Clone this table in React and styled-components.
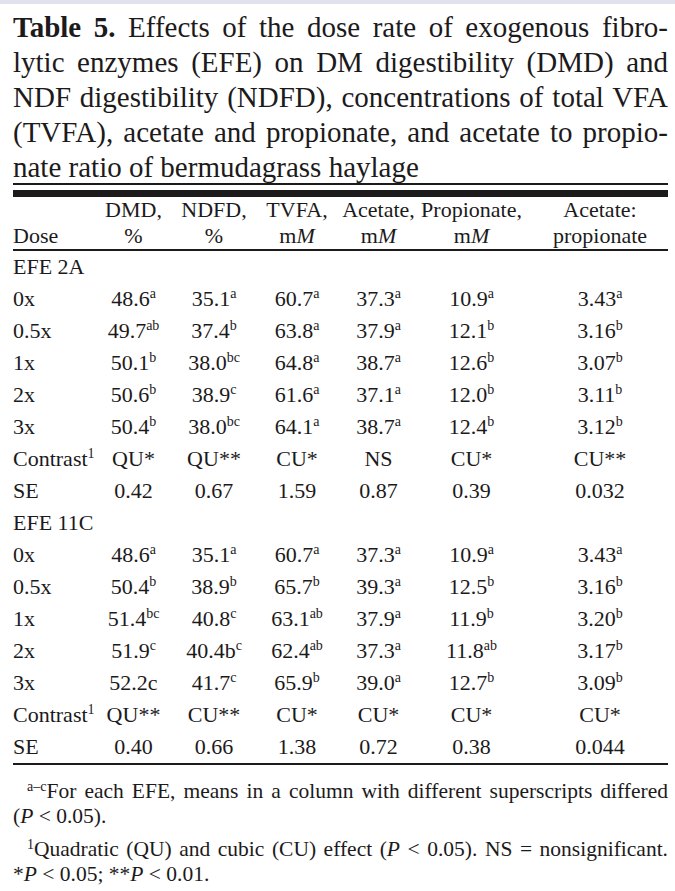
import React from 'react'
import styled, { createGlobalStyle } from 'styled-components'

const GlobalStyle = createGlobalStyle`
  html, body {
    margin: 0;
    padding: 0;
    background: #ffffff;
  }
  body {
    font-family: "Liberation Serif", "Times New Roman", serif;
    color: #1c1a1b;
  }
`

const Page = styled.div`
  width: 675px;
  min-height: 891px;
  box-sizing: border-box;
  border-top: 4px solid #e2e2ee;
  padding: 6px 7px 0 13px;
`

const Caption = styled.div`
  font-size: 29px;
  line-height: 35px;
`

const CaptionLine = styled.div`
  text-align: justify;
  text-align-last: ${p => (p.$last ? 'left' : 'justify')};
  white-space: nowrap;
`

const Bold = styled.b`
  font-weight: 700;
`

const DoubleRule = styled.div`
  margin-top: -2px;
  height: 2px;
  background: #1c1a1b;
  border-bottom: 5px solid #fff;
  box-shadow: 0 7px 0 0 #1c1a1b;
  margin-bottom: 2px;
`

const Table = styled.table`
  width: 100%;
  border-collapse: collapse;
  font-size: 22px;
  table-layout: fixed;
`

const Col = styled.col`
  width: ${p => p.$w}px;
`

const HeadCell = styled.th`
  font-weight: 400;
  text-align: ${p => (p.$left ? 'left' : 'center')};
  vertical-align: bottom;
  line-height: 26px;
  padding: 5px 0 0;
  padding-left: ${p => p.$pl || 0}px;
  border-bottom: 2.5px solid #1c1a1b;
  white-space: nowrap;
`

const Cell = styled.td`
  text-align: ${p => (p.$left ? 'left' : 'center')};
  height: 32px;
  padding: 0;
  padding-left: ${p => p.$pl || 0}px;
  line-height: 32px;
  white-space: nowrap;
`

const Row = styled.tr`
  border-bottom: ${p => (p.$last ? '2.5px solid #1c1a1b' : 'none')};
`

const Sup = styled.sup`
  font-size: 14px;
  line-height: 0;
  vertical-align: 8px;
`

const Notes = styled.div`
  font-size: 21.5px;
  line-height: 25px;
  padding-top: 14px;
`

const Note = styled.p`
  margin: 0 0 8px;
  text-indent: 14px;
  text-align: justify;
`

const NoteSup = styled.sup`
  font-size: 14px;
  line-height: 0;
  vertical-align: 7px;
`

const Nowrap = styled.span`
  white-space: nowrap;
`

const mM = <>m<i>M</i></>

const groups = [
  {
    name: 'EFE 2A',
    rows: [
      ['0x', ['48.6', 'a'], ['35.1', 'a'], ['60.7', 'a'], ['37.3', 'a'], ['10.9', 'a'], ['3.43', 'a']],
      ['0.5x', ['49.7', 'ab'], ['37.4', 'b'], ['63.8', 'a'], ['37.9', 'a'], ['12.1', 'b'], ['3.16', 'b']],
      ['1x', ['50.1', 'b'], ['38.0', 'bc'], ['64.8', 'a'], ['38.7', 'a'], ['12.6', 'b'], ['3.07', 'b']],
      ['2x', ['50.6', 'b'], ['38.9', 'c'], ['61.6', 'a'], ['37.1', 'a'], ['12.0', 'b'], ['3.11', 'b']],
      ['3x', ['50.4', 'b'], ['38.0', 'bc'], ['64.1', 'a'], ['38.7', 'a'], ['12.4', 'b'], ['3.12', 'b']],
    ],
    contrast: ['QU*', 'QU**', 'CU*', 'NS', 'CU*', 'CU**'],
    se: ['0.42', '0.67', '1.59', '0.87', '0.39', '0.032'],
  },
  {
    name: 'EFE 11C',
    rows: [
      ['0x', ['48.6', 'a'], ['35.1', 'a'], ['60.7', 'a'], ['37.3', 'a'], ['10.9', 'a'], ['3.43', 'a']],
      ['0.5x', ['50.4', 'b'], ['38.9', 'b'], ['65.7', 'b'], ['39.3', 'a'], ['12.5', 'b'], ['3.16', 'b']],
      ['1x', ['51.4', 'bc'], ['40.8', 'c'], ['63.1', 'ab'], ['37.9', 'a'], ['11.9', 'b'], ['3.20', 'b']],
      ['2x', ['51.9', 'c'], ['40.4b', 'c'], ['62.4', 'ab'], ['37.3', 'a'], ['11.8', 'ab'], ['3.17', 'b']],
      ['3x', ['52.2c', ''], ['41.7', 'c'], ['65.9', 'b'], ['39.0', 'a'], ['12.7', 'b'], ['3.09', 'b']],
    ],
    contrast: ['QU**', 'CU**', 'CU*', 'CU*', 'CU*', 'CU*'],
    se: ['0.40', '0.66', '1.38', '0.72', '0.38', '0.044'],
  },
]

const widths = [82, 77, 84, 82, 81, 105, 144]

const App = () => {
  const renderValues = (vals) =>
    vals.map((v, i) => (
      <Cell key={i} $pl={i === 5 ? 8 : 0}>
        {Array.isArray(v) ? <>{v[0]}{v[1] && <Sup>{v[1]}</Sup>}</> : v}
      </Cell>
    ))

  return (
    <Page>
      <GlobalStyle />
      <Caption>
        <CaptionLine><Bold>Table 5.</Bold> Effects of the dose rate of exogenous fibro-</CaptionLine>
        <CaptionLine>lytic enzymes (EFE) on DM digestibility (DMD) and</CaptionLine>
        <CaptionLine>NDF digestibility (NDFD), concentrations of total VFA</CaptionLine>
        <CaptionLine>(TVFA), acetate and propionate, and acetate to propio-</CaptionLine>
        <CaptionLine $last>nate ratio of bermudagrass haylage</CaptionLine>
      </Caption>
      <DoubleRule />
      <Table>
        <colgroup>
          {widths.map((w, i) => <Col key={i} $w={w} />)}
        </colgroup>
        <thead>
          <tr>
            <HeadCell $left>Dose</HeadCell>
            <HeadCell>DMD,<br />%</HeadCell>
            <HeadCell>NDFD,<br />%</HeadCell>
            <HeadCell>TVFA,<br />{mM}</HeadCell>
            <HeadCell>Acetate,<br />{mM}</HeadCell>
            <HeadCell>Propionate,<br />{mM}</HeadCell>
            <HeadCell $pl={8}>Acetate:<br />propionate</HeadCell>
          </tr>
        </thead>
        <tbody>
          {groups.map((g, gi) => (
            <React.Fragment key={g.name}>
              <Row>
                <Cell $left colSpan={7}>{g.name}</Cell>
              </Row>
              {g.rows.map(r => (
                <Row key={r[0]}>
                  <Cell $left>{r[0]}</Cell>
                  {renderValues(r.slice(1))}
                </Row>
              ))}
              <Row>
                <Cell $left>Contrast<Sup>1</Sup></Cell>
                {renderValues(g.contrast)}
              </Row>
              <Row $last={gi === groups.length - 1}>
                <Cell $left>SE</Cell>
                {renderValues(g.se)}
              </Row>
            </React.Fragment>
          ))}
        </tbody>
      </Table>
      <Notes>
        <Note>
          <NoteSup>a–c</NoteSup>For each EFE, means in a column with different superscripts differed{' '}
          <Nowrap>(<i>P</i> &lt; 0.05).</Nowrap>
        </Note>
        <Note>
          <NoteSup>1</NoteSup>Quadratic (QU) and cubic (CU) effect <Nowrap>(<i>P</i> &lt; 0.05).</Nowrap> NS = nonsignificant.{' '}
          <Nowrap>*<i>P</i> &lt; 0.05;</Nowrap> <Nowrap>**<i>P</i> &lt; 0.01.</Nowrap>
        </Note>
      </Notes>
    </Page>
  )
}

export default App
